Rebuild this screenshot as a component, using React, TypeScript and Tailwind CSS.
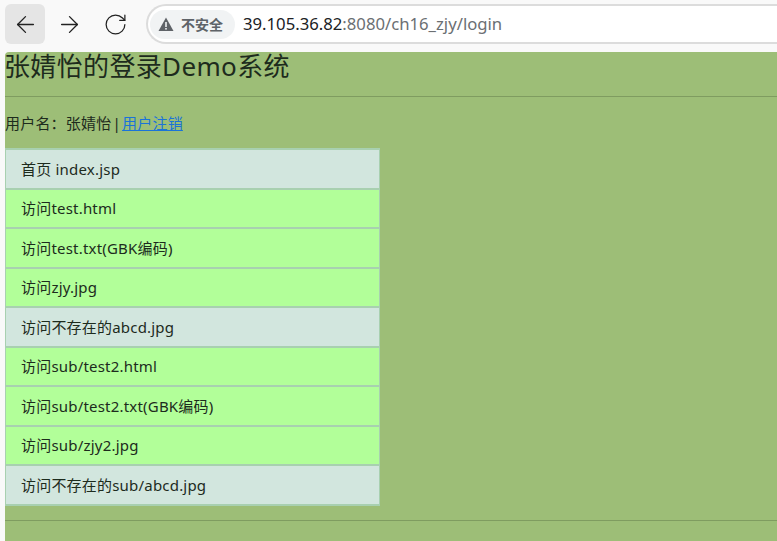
import { ArrowLeft, ArrowRight, RotateCw } from "lucide-react";

const links = [
  { label: "首页 index.jsp", dim: true },
  { label: "访问test.html" },
  { label: "访问test.txt(GBK编码)" },
  { label: "访问zjy.jpg" },
  { label: "访问不存在的abcd.jpg", dim: true },
  { label: "访问sub/test2.html" },
  { label: "访问sub/test2.txt(GBK编码)" },
  { label: "访问sub/zjy2.jpg" },
  { label: "访问不存在的sub/abcd.jpg", dim: true },
];

function Toolbar() {
  return (
    <div className="flex h-[52px] items-start bg-[#f9f9f9] pt-1">
      <div className="ml-[5px] flex h-[40px] w-[40px] items-center justify-center rounded-md bg-[#e5e5e5]">
        <ArrowLeft size={27} strokeWidth={1.2} color="#222" />
      </div>
      <div className="flex h-[40px] w-[48px] items-center justify-center">
        <ArrowRight size={27} strokeWidth={1.2} color="#222" />
      </div>
      <div className="flex h-[40px] w-[44px] items-center justify-center">
        <RotateCw size={25} strokeWidth={1.2} color="#222" />
      </div>
      <div className="ml-[9px] flex h-[40px] flex-1 items-center rounded-l-[20px] border-2 border-r-0 border-[#dcdcdc] bg-white pl-[2px]">
        <div className="flex h-[29px] w-[85px] items-center gap-[7px] rounded-full bg-[#f1f3f4] pl-[8px]">
          <svg width="16" height="15" viewBox="0 0 16 15" className="shrink-0">
            <path d="M8 0.5 L15.5 14 H0.5 Z" fill="#5f6368" />
            <rect x="7.2" y="5" width="1.6" height="5" fill="#f1f3f4" />
            <rect x="7.2" y="11" width="1.6" height="1.6" fill="#f1f3f4" />
          </svg>
          <span className="whitespace-nowrap text-[14px] font-bold text-[#5f6368]">不安全</span>
        </div>
        <span className="ml-2 text-[16.7px] text-[#202124]">
          39.105.36.82<span className="text-[#6b6f73]">:8080/ch16_zjy/login</span>
        </span>
      </div>
    </div>
  );
}

export default function App() {
  return (
    <div className="h-[541px] w-[777px] overflow-hidden bg-[#f9f9f9] font-['Noto_Sans','Noto_Sans_CJK_SC',sans-serif]">
      <Toolbar />
      <div className="ml-[5px] h-[489px] rounded-tl-[4px] bg-[#9dbe77] text-[15px] tracking-[0.2px] text-[#1d2b1d]">
        <h3 className="-ml-px pt-px text-[26px] leading-[26px] tracking-[0.35px]">张婧怡的登录Demo系统</h3>
        <hr className="mt-[17px] border-t border-[#7f9c60]" />
        <p className="mt-[16px] leading-[20px] [word-spacing:-3px]">
          用户名：张婧怡 | <a className="text-[#1a73d9] underline">用户注销</a>
        </p>
        <ul className="mt-[15px] w-[375px]">
          {links.map((item) => (
            <li
              key={item.label}
              className={`-mt-[2px] flex h-[41.55px] items-center border-x border-y-2 border-[#a8d0b0] px-[15px] first:mt-0 ${
                item.dim ? "bg-[#d2e6de]" : "bg-[#b2ff99]"
              }`}
            >
              {item.label}
            </li>
          ))}
        </ul>
        <hr className="mt-[14px] border-t border-[#7f9c60]" />
      </div>
    </div>
  );
}
